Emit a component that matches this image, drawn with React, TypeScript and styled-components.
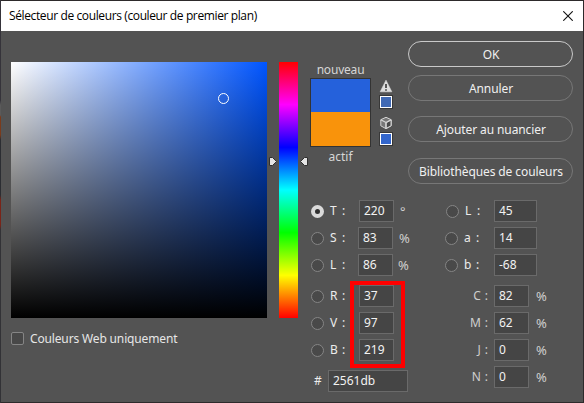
import React from "react";
import styled, { createGlobalStyle } from "styled-components";

const GlobalStyle = createGlobalStyle`
  *, *::before, *::after { box-sizing: border-box; }
  html, body { margin: 0; padding: 0; overflow: hidden; }
  body { font-family: "Noto Sans", "Open Sans", sans-serif; font-size: 12px; color: #e6e6e6; }
`;

const Desktop = styled.div`
  width: 584px;
  height: 403px;
  padding: 1px;
  background: linear-gradient(#35333a 0 100px, #5a5a5a 105px 115px, #7a3b1c 117px 135px, #2b2d32 140px 195px, #7a2418 200px 225px, #323236 230px) left / 1px 100% no-repeat, #2d2a2b;
`;

const Dialog = styled.div`
  width: 582px;
  height: 401px;
  background: #535353;
`;

const TitleBar = styled.header`
  display: flex;
  align-items: center;
  justify-content: space-between;
  height: 30px;
  padding: 0 10px 0 8px;
  background: #fff;
  color: #000;
  font: 12px/30px "Open Sans", "Noto Sans", sans-serif;
`;

const Title = styled.span<{ $spacing: number }>`
  letter-spacing: ${(p) => p.$spacing}px;
  white-space: nowrap;
`;

const Body = styled.main`
  display: grid;
  grid-template-columns: 256px 43px 1fr;
  padding-left: 10px;
`;

const PickerColumn = styled.section`
  padding-top: 31px;
`;

const ColorField = styled.div`
  position: relative;
  width: 256px;
  height: 256px;
  background: linear-gradient(to top, #000, transparent), linear-gradient(to right, #fff, #0055ff);
`;

const FieldMarker = styled.i`
  position: absolute;
  left: 207px;
  top: 31px;
  width: 11px;
  height: 11px;
  border: 1px solid #fff;
  border-radius: 50%;
`;

const WebOnly = styled.label`
  display: flex;
  align-items: center;
  gap: 6px;
  height: 20px;
  margin-top: 10px;
  white-space: nowrap;
`;

const CheckBox = styled.i`
  width: 13px;
  height: 13px;
  border: 1px solid #858585;
  border-radius: 2px;
  background: #484848;
`;

const HueColumn = styled.section`
  display: grid;
  grid-template-columns: 12px 19px 12px;
  padding-top: 31px;
`;

const HueStrip = styled.div`
  height: 256px;
  background: linear-gradient(#f00, #f0f, #00f, #0ff, #0f0, #ff0, #f00);
`;

const HueArrow = styled.svg`
  width: 10px;
  height: 11px;
  margin: 94px 0 0 1px;
`;

const Controls = styled.section`
  display: grid;
  grid-template-rows: 169px auto;
`;

const Upper = styled.div`
  display: flex;
`;

const Preview = styled.div`
  display: flex;
  flex-direction: column;
  align-items: center;
  width: 61px;
  padding-top: 29px;
`;

const Caption = styled.span<{ $spacing?: number }>`
  height: 18px;
  line-height: 19px;
  color: #d6d6d6;
  letter-spacing: ${(p) => p.$spacing ?? 0}px;
`;

const Swatches = styled.div`
  width: 61px;
  height: 69px;
  border: 1px solid #333;
  background: linear-gradient(#2561db 0 33px, #f9930b 33px);
`;

const Warnings = styled.div`
  display: flex;
  flex-direction: column;
  align-items: center;
  width: 14px;
  margin-left: 8px;
  padding-top: 48px;
`;

const WarningIcon = styled.svg`
  width: 14px;
  height: 14px;
  margin: 0 1px 2px 0;
`;

const NearColor = styled.i<{ $color: string }>`
  width: 14px;
  height: 14px;
  margin-bottom: 7px;
  border: 1px solid #383838;
  box-shadow: inset 0 0 0 1px #fff;
  background: ${(p) => p.$color};
`;

const Buttons = styled.div`
  display: flex;
  flex-direction: column;
  margin-left: 15px;
  padding-top: 10px;
`;

const Button = styled.button<{ $primary?: boolean; $gap: number; $spacing?: number }>`
  width: 165px;
  height: 26px;
  margin: 0 0 ${(p) => p.$gap}px;
  padding: 0 0 0 1px;
  flex: none;
  border: ${(p) => (p.$primary ? "1.5px solid #c9c9c9" : "1px solid #777")};
  border-radius: 13px;
  background: transparent;
  color: #f0f0f0;
  font: inherit;
  line-height: 23px;
  letter-spacing: ${(p) => p.$spacing ?? -0.1}px;
  white-space: nowrap;
`;

const Fields = styled.div`
  display: grid;
  grid-template-columns: 135px 1fr;
`;

const Group = styled.div<{ $gap?: number }>`
  display: flex;
  flex-direction: column;
  gap: 5px;
  margin-bottom: ${(p) => p.$gap ?? 0}px;
`;

const Row = styled.div<{ $shift?: number }>`
  display: flex;
  align-items: center;
  height: 22px;
  margin-left: ${(p) => p.$shift ?? 0}px;
`;

const Radio = styled.i<{ $on?: boolean }>`
  width: 13px;
  height: 13px;
  margin: 0 6px 0 1px;
  flex: none;
  border-radius: 50%;
  border: ${(p) => (p.$on ? "4px solid #dadada" : "1px solid #858585")};
  background: ${(p) => (p.$on ? "#303030" : "#494949")};
`;

const FieldLabel = styled.span<{ $width: number; $right?: boolean }>`
  display: flex;
  gap: 4px;
  width: ${(p) => p.$width}px;
  flex: none;
  justify-content: ${(p) => (p.$right ? "flex-end" : "flex-start")};
  padding-right: ${(p) => (p.$right ? 6 : 0)}px;
  line-height: 20px;
  color: ${(p) => (p.$right ? "#cfcfcf" : "#ececec")};
  & > :first-child { min-width: ${(p) => (p.$right ? 0 : 8)}px; }
`;

const Value = styled.span<{ $width: number }>`
  width: ${(p) => p.$width}px;
  height: 22px;
  flex: none;
  padding-left: 4px;
  border: 1px solid #6a6a6a;
  background: #454545;
  color: #f2f2f2;
  line-height: 20px;
`;

const Unit = styled.span<{ $gap?: number }>`
  margin-left: ${(p) => p.$gap ?? 6}px;
  color: #cfcfcf;
  font-size: 13px;
  line-height: 22px;
`;

const Highlighted = styled.div`
  position: relative;
  &::after {
    content: "";
    position: absolute;
    left: 40px;
    top: -4px;
    width: 55px;
    height: 87px;
    border: 4px solid #fe0000;
  }
`;

const HexRow = styled(Row)`
  margin-top: 9px;
  padding-left: 4px;
`;

interface FieldProps {
  name: string;
  value: string;
  unit?: string;
  unitGap?: number;
  on?: boolean;
  shift?: number;
  inset?: number;
  width?: number;
}

const RadioField = ({ name, value, unit, unitGap, on, shift = 0, inset = 0, width = 35 }: FieldProps) => (
  <Row $shift={shift}>
    <Radio $on={on} />
    <FieldLabel $width={29 + inset}><span>{name}</span><span>:</span></FieldLabel>
    <Value $width={width}>{value}</Value>
    {unit && <Unit $gap={unitGap}>{unit}</Unit>}
  </Row>
);

const inks = [
  ["C", "82"],
  ["M", "62"],
  ["J", "0"],
  ["N", "0"],
];

export default function App() {
  return (
    <>
      <GlobalStyle />
      <Desktop>
        <Dialog>
          <TitleBar>
            <Title $spacing={-0.38}>Sélecteur de couleurs (couleur de premier plan)</Title>
            <svg width="10" height="10" viewBox="0 0 10 10" stroke="#111" strokeWidth="1.1">
              <path d="M0.3 0.3 9.7 9.7M9.7 0.3 0.3 9.7" />
            </svg>
          </TitleBar>
          <Body>
            <PickerColumn>
              <ColorField><FieldMarker /></ColorField>
              <WebOnly><CheckBox /><Title $spacing={-0.15}>Couleurs Web uniquement</Title></WebOnly>
            </PickerColumn>
            <HueColumn>
              <HueArrow viewBox="0 0 10 11" fill="#e4e4e4" stroke="#303030">
                <path d="M1.5 1.5H4.5L8.5 5.5 4.5 9.5H1.5Z" />
              </HueArrow>
              <HueStrip />
              <HueArrow viewBox="0 0 10 11" fill="#e4e4e4" stroke="#303030">
                <path d="M8.5 1.5H5.5L1.5 5.5 5.5 9.5H8.5Z" />
              </HueArrow>
            </HueColumn>
            <Controls>
              <Upper>
                <Preview>
                  <Caption $spacing={-0.2}>nouveau</Caption>
                  <Swatches />
                  <Caption>actif</Caption>
                </Preview>
                <Warnings>
                  <WarningIcon viewBox="0 0 14 14">
                    <path d="M7 1.2 12.8 12.8H1.2Z" fill="#dedede" stroke="#dedede" strokeLinejoin="round" strokeWidth=".6" />
                    <path d="M7 5V9M7 10.3V11.8" stroke="#484848" strokeWidth="1.8" />
                  </WarningIcon>
                  <NearColor $color="#416ab5" />
                  <WarningIcon viewBox="0 0 14 14" fill="none" stroke="#d5d5d5" strokeLinejoin="round">
                    <path d="M7 1.3 12.2 3.7V9.8L7 12.7 1.8 9.8V3.7Z" fill="#777" />
                    <path d="M7 6.7 12 4V9.8L7 12.5Z" fill="#4a4a4a" />
                    <path d="M1.8 3.7 7 6.5 12.2 3.7M7 6.5V12.7" strokeWidth="1.3" />
                  </WarningIcon>
                  <NearColor $color="#3366cc" />
                </Warnings>
                <Buttons>
                  <Button $primary $gap={8}>OK</Button>
                  <Button $gap={15}>Annuler</Button>
                  <Button $gap={16}>Ajouter au nuancier</Button>
                  <Button $gap={0}>Bibliothèques de couleurs</Button>
                </Buttons>
              </Upper>
              <Fields>
                <div>
                  <Group $gap={9}>
                    <RadioField name="T" value="220" unit="°" on />
                    <RadioField name="S" value="83" unit="%" inset={-1} />
                    <RadioField name="L" value="86" unit="%" unitGap={5} inset={-1} />
                  </Group>
                  <Highlighted>
                    <Group>
                      <RadioField name="R" value="37" />
                      <RadioField name="V" value="97" />
                      <RadioField name="B" value="219" />
                    </Group>
                  </Highlighted>
                  <HexRow>
                    <FieldLabel $width={14}><span>#</span></FieldLabel>
                    <Value $width={80}>2561db</Value>
                  </HexRow>
                </div>
                <div>
                  <Group $gap={9}>
                    <RadioField name="L" value="45" width={43} />
                    <RadioField name="a" value="14" width={43} shift={-1} inset={1} />
                    <RadioField name="b" value="-68" width={43} shift={-1} inset={1} />
                  </Group>
                  <Group>
                    {inks.map(([name, value]) => (
                      <Row key={name}>
                        <FieldLabel $width={49} $right><span>{name}</span><span>:</span></FieldLabel>
                        <Value $width={35}>{value}</Value>
                        <Unit $gap={7}>%</Unit>
                      </Row>
                    ))}
                  </Group>
                </div>
              </Fields>
            </Controls>
          </Body>
        </Dialog>
      </Desktop>
    </>
  );
}
